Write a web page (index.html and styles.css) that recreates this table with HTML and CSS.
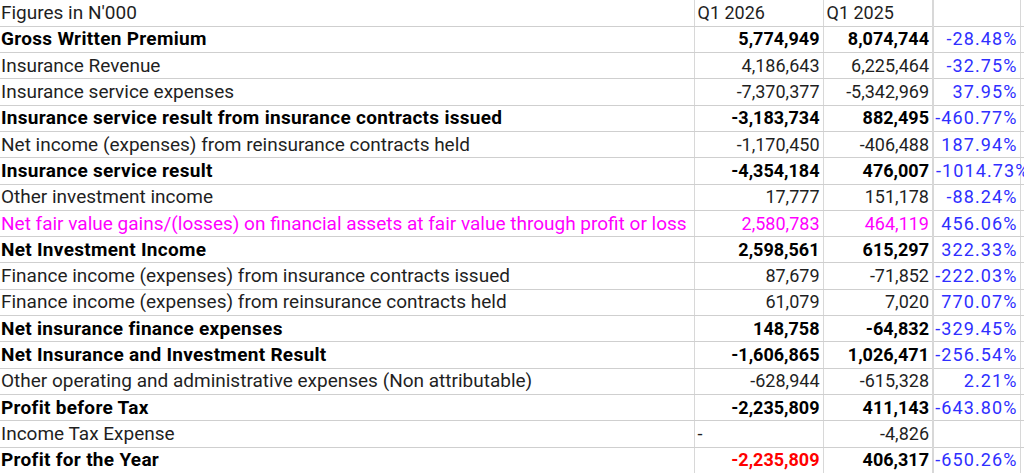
FILE: index.html
```html
<!DOCTYPE html>
<html>
<head>
<meta charset="utf-8">
<link rel="stylesheet" href="styles.css">
</head>
<body>
<table class="sheet">
  <colgroup>
    <col class="c-label"><col class="c-a"><col class="c-b"><col class="c-pct"><col class="c-extra">
  </colgroup>
  <tr class="head"><td>Figures in N'000</td><td class="l">Q1 2026</td><td class="l">Q1 2025</td><td class="pct"></td><td class="x"></td></tr>
  <tr class="b"><td>Gross Written Premium</td><td>5,774,949</td><td>8,074,744</td><td class="pct">-28.48%</td><td class="x"></td></tr>
  <tr><td>Insurance Revenue</td><td>4,186,643</td><td>6,225,464</td><td class="pct">-32.75%</td><td class="x"></td></tr>
  <tr><td>Insurance service expenses</td><td>-7,370,377</td><td>-5,342,969</td><td class="pct">37.95%</td><td class="x"></td></tr>
  <tr class="b"><td>Insurance service result from insurance contracts issued</td><td>-3,183,734</td><td>882,495</td><td class="pct">-460.77%</td><td class="x"></td></tr>
  <tr><td>Net income (expenses) from reinsurance contracts held</td><td>-1,170,450</td><td>-406,488</td><td class="pct">187.94%</td><td class="x"></td></tr>
  <tr class="b"><td>Insurance service result</td><td>-4,354,184</td><td>476,007</td><td class="pct spill"><span>-1014.73%</span></td><td class="x"></td></tr>
  <tr><td>Other investment income</td><td>17,777</td><td>151,178</td><td class="pct">-88.24%</td><td class="x"></td></tr>
  <tr class="pink"><td>Net fair value gains/(losses) on financial assets at fair value through profit or loss</td><td>2,580,783</td><td>464,119</td><td class="pct">456.06%</td><td class="x"></td></tr>
  <tr class="b"><td>Net Investment Income</td><td>2,598,561</td><td>615,297</td><td class="pct">322.33%</td><td class="x"></td></tr>
  <tr><td>Finance income (expenses) from insurance contracts issued</td><td>87,679</td><td>-71,852</td><td class="pct">-222.03%</td><td class="x"></td></tr>
  <tr><td>Finance income (expenses) from reinsurance contracts held</td><td>61,079</td><td>7,020</td><td class="pct">770.07%</td><td class="x"></td></tr>
  <tr class="b"><td>Net insurance finance expenses</td><td>148,758</td><td>-64,832</td><td class="pct">-329.45%</td><td class="x"></td></tr>
  <tr class="b"><td>Net Insurance and Investment Result</td><td>-1,606,865</td><td>1,026,471</td><td class="pct">-256.54%</td><td class="x"></td></tr>
  <tr><td>Other operating and administrative expenses (Non attributable)</td><td>-628,944</td><td>-615,328</td><td class="pct">2.21%</td><td class="x"></td></tr>
  <tr class="b"><td>Profit before Tax</td><td>-2,235,809</td><td>411,143</td><td class="pct">-643.80%</td><td class="x"></td></tr>
  <tr><td>Income Tax Expense</td><td class="l">-</td><td>-4,826</td><td class="pct"></td><td class="x"></td></tr>
  <tr class="b"><td>Profit for the Year</td><td class="red">-2,235,809</td><td>406,317</td><td class="pct">-650.26%</td><td class="x"></td></tr>
</table>
</body>
</html>
```

FILE: styles.css
```css
html, body {
  margin: 0;
  padding: 0;
  background: #ffffff;
  overflow: hidden;
}
.sheet {
  border-collapse: collapse;
  table-layout: fixed;
  width: 1040px;
  font-family: Roboto, "Liberation Sans", sans-serif;
  font-size: 18px;
  color: #1f1f1f;
}
.c-label { width: 694px; }
.c-a { width: 129px; }
.c-b { width: 110px; }
.c-pct { width: 87px; }
.c-extra { width: 20px; }
.sheet tr { height: 26.3px; }
.sheet td {
  padding: 0 3px 0 1px;
  border-bottom: 1px solid #cfcfcf;
  border-left: 1px solid #d8d8d8;
  white-space: nowrap;
  overflow: hidden;
  text-align: right;
  line-height: 20px;
  vertical-align: middle;
}
.sheet td:first-child {
  text-align: left;
  border-left: none;
  font-size: 19px;
}
.b td:first-child { letter-spacing: 0.3px; }
.sheet td.l { text-align: left; padding-left: 3px; }
.sheet td.pct {
  color: #2f2fff;
  font-weight: 400;
  letter-spacing: 1.1px;
  padding-right: 2px;
  border-left: 2px solid #d8d8d8;
}
.sheet td.spill { overflow: visible; text-align: left; padding-left: 2px; }
.sheet td.x { border-left: 1px solid #d8d8d8; }
.b td { font-weight: 700; color: #000; }
.b td.pct { font-weight: 400; color: #2f2fff; }
.pink td { color: #ff00ff; }
.pink td.pct { color: #2f2fff; }
.sheet td.red { color: #ff0000; }
.head td { color: #1f1f1f; }
```
